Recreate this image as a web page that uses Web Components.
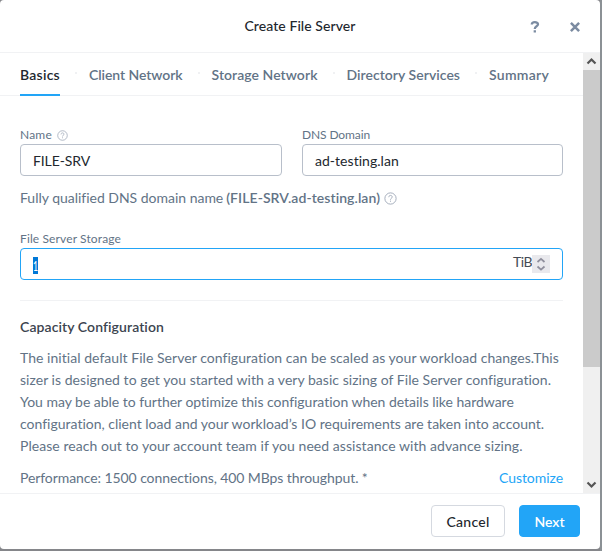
<!DOCTYPE html>
<html lang="en"><head><meta charset="utf-8"><title>Create File Server</title>
<style>
html,body{margin:0;height:551px;overflow:hidden}
body{font:14px/22px Lato,"Open Sans",sans-serif;color:#627386;background:linear-gradient(90deg,transparent 600px,#8b9195 600px),#85868a}
</style></head><body>
<file-server-dialog></file-server-dialog>
<script>
const define=(name,html,init)=>customElements.define(name,class extends HTMLElement{
  connectedCallback(){
    if(this.shadowRoot)return;
    const t=document.createElement('template');t.innerHTML=html;
    this.attachShadow({mode:'open'}).append(t.content.cloneNode(true));
    if(init)init(this);
  }
});
/* One line of text, tracked to fill a given measure. */
define('text-line','<style>:host{display:block;white-space:nowrap;width:max-content}span{display:inline-block}</style><span><slot></slot></span>',el=>{
  const s=el.shadowRoot.querySelector('span'),n=el.textContent.length,w=+el.getAttribute('measure');
  const d=(w-s.getBoundingClientRect().width)/n;
  s.style.letterSpacing=d+'px';
});
define('help-icon',`<style>:host{display:block;width:var(--size,12px);height:var(--size,12px)}svg{display:block;width:100%;height:100%}</style>
<svg viewBox="0 0 12 12" fill="none" stroke="#a3adbb" stroke-width=".9"><circle cx="6" cy="6" r="5.2"/><path d="M4.4 4.8c0-2.2 3.2-2.1 3.2-.2 0 1.2-1.6 1.2-1.6 2.5M6 8v1"/></svg>`);
define('dialog-header',`<style>
:host{display:grid;grid-template-columns:1fr 111px 1fr;height:52px;border-bottom:1px solid #f1f2f4;align-items:center;color:#22272e}
text-line{grid-column:2;font-weight:500}
.icons{display:flex;justify-content:flex-end;align-items:center;gap:30px;padding:1px 20px 0 0}
svg{display:block}</style>
<text-line measure="111">Create File Server</text-line>
<div class="icons"><svg width="10" height="12" viewBox="0 0 10 12" fill="none" stroke="#7b8ba1" stroke-width="2.3"><path d="M1.8 3.5C1.8.4 8 .5 8 3.3 8 5.4 4.8 5.1 4.8 7.9M4.8 9.3v2.3"/></svg>
<svg width="10" height="10" viewBox="0 0 10 10" stroke="#7b8ba1" stroke-width="2.5"><path d="M.9.9l8.2 8.2M9.1.9L.9 9.1"/></svg></div>`);
define('step-tab',`<style>:host{display:flex;align-items:center;height:43px;box-sizing:border-box;font-weight:600;color:#627386;border-bottom:2px solid transparent;padding-top:3px}
:host([active]){color:#22272e;border-color:#22a5f7}</style><slot></slot>`);
define('step-tabs',`<style>:host{display:flex;align-items:flex-start;height:42px;border-bottom:1px solid #f1f2f4;padding-left:20px}
i{width:2px;height:2px;margin:19px 12px 0 15px;background:#f0f1f3}</style>
<step-tab active><text-line measure="40">Basics</text-line></step-tab><i></i>
<step-tab><text-line measure="93.5">Client Network</text-line></step-tab><i></i>
<step-tab><text-line measure="106">Storage Network</text-line></step-tab><i></i>
<step-tab><text-line measure="113.5">Directory Services</text-line></step-tab><i></i>
<step-tab><text-line measure="60">Summary</text-line></step-tab>`);
define('form-field',`<style>:host{display:block}
.label{display:flex;align-items:center;gap:5px;height:16px;font-size:12px;line-height:16px;padding-bottom:1px}
.box{display:flex;align-items:center;justify-content:space-between;height:32px;box-sizing:border-box;border:1px solid #b8bfca;border-radius:4px;padding:2px 12px 0;color:#22272e}
:host([focused]) .box{border-color:#22a5f7}</style><div class="label"><slot name="label"></slot></div><div class="box"><slot></slot></div>`);
define('number-spinner',`<style>:host{display:block;width:18px;height:18px;background:#e9e9ed}svg{display:block}</style>
<svg width="18" height="18" fill="none" stroke="#8f8f9d" stroke-width="1.7"><path d="M5.5 7L9 3.8 12.5 7M5.5 11.5L9 14.7l3.5-3.2"/></svg>`);
define('scroll-bar',`<style>:host{display:flex;flex-direction:column;width:17px;background:#f0f0f0}svg{display:block;flex:none}.thumb{height:297px;background:#cbcbcb}.rest{flex:1}</style>
<svg width="17" height="17" fill="none" stroke="#555" stroke-width="2.2"><path d="M4.5 10.5l4-4 4 4"/></svg><div class="thumb"></div><div class="rest"></div>
<svg width="17" height="17" fill="none" stroke="#555" stroke-width="2.2"><path d="M4.5 6.5l4 4 4-4"/></svg>`);
define('action-button',`<style>:host{display:flex;align-items:center;justify-content:center;box-sizing:border-box;width:74px;height:32px;border:1px solid #d5d9e0;border-radius:4px;color:#22272e;font-weight:500;padding-top:2px}
:host([primary]){width:61px;background:#22a5f7;border-color:#22a5f7;color:#fff;font-weight:600}</style><slot></slot>`);
define('basics-form',`<style>:host{display:block;padding:31px 20px 0}
.row{display:grid;grid-template-columns:262px 261px;gap:20px}
.fqdn{display:flex;align-items:center;margin-top:11px;gap:3px}b{font-weight:600}
help-icon.big{--size:13px;margin-left:1px}
.storage{margin-top:22px}
.sel{display:block;width:5px;height:17px;line-height:18px;background:#0078d7;color:#fff}
.sel text-line{transform:scaleX(.62);transform-origin:0 50%;width:8px}
.unit{display:flex;align-items:center}.unit text-line{margin-top:-7px;color:#454b55}.unit number-spinner{margin-top:-2px}
hr{border:0;height:1px;background:#f1f2f4;margin:20px 0 15px}
h2{margin:0 0 9px;font:inherit;font-weight:600;color:#3c444f}
.perf{display:flex;justify-content:space-between;margin-top:10px}.perf text-line:last-child{color:#22a5f7}</style>
<div class="row"><form-field><text-line slot="label" measure="32">Name</text-line><help-icon slot="label" style="--size:11px"></help-icon><text-line measure="57">FILE-SRV</text-line></form-field>
<form-field><text-line slot="label" measure="68">DNS Domain</text-line><text-line measure="84">ad-testing.lan</text-line></form-field></div>
<div class="fqdn"><text-line measure="203">Fully qualified DNS domain name</text-line><b><text-line measure="154">(FILE-SRV.ad-testing.lan)</text-line></b><help-icon class="big"></help-icon></div>
<form-field class="storage" focused><text-line slot="label" measure="101">File Server Storage</text-line><span class="sel"><text-line measure="8">1</text-line></span><span class="unit"><text-line measure="19">TiB</text-line><number-spinner></number-spinner></span></form-field>
<hr><h2><text-line measure="144">Capacity Configuration</text-line></h2>
<text-line measure="539">The initial default File Server configuration can be scaled as your workload changes.This</text-line>
<text-line measure="531">sizer is designed to get you started with a very basic sizing of File Server configuration.</text-line>
<text-line measure="494">You may be able to further optimize this configuration when details like hardware</text-line>
<text-line measure="524">configuration, client load and your workload’s IO requirements are taken into account.</text-line>
<text-line measure="502.5">Please reach out to your account team if you need assistance with advance sizing.</text-line>
<div class="perf"><text-line measure="348">Performance: 1500 connections, 400 MBps throughput. *</text-line><text-line measure="64">Customize</text-line></div>`);
define('file-server-dialog',`<style>:host{display:flex;flex-direction:column;width:600px;height:549px;background:#fff;border-radius:4px}
.mid{display:grid;grid-template-columns:583px 17px;height:440px;overflow:hidden}
footer{display:flex;justify-content:flex-end;gap:14px;height:56px;border-top:1px solid #f1f2f4;padding:11px 20px 0;box-sizing:border-box}</style>
<dialog-header></dialog-header><div class="mid"><main><step-tabs></step-tabs><basics-form></basics-form></main><scroll-bar></scroll-bar></div>
<footer><action-button><text-line measure="43">Cancel</text-line></action-button><action-button primary><text-line measure="30">Next</text-line></action-button></footer>`);
</script></body></html>
